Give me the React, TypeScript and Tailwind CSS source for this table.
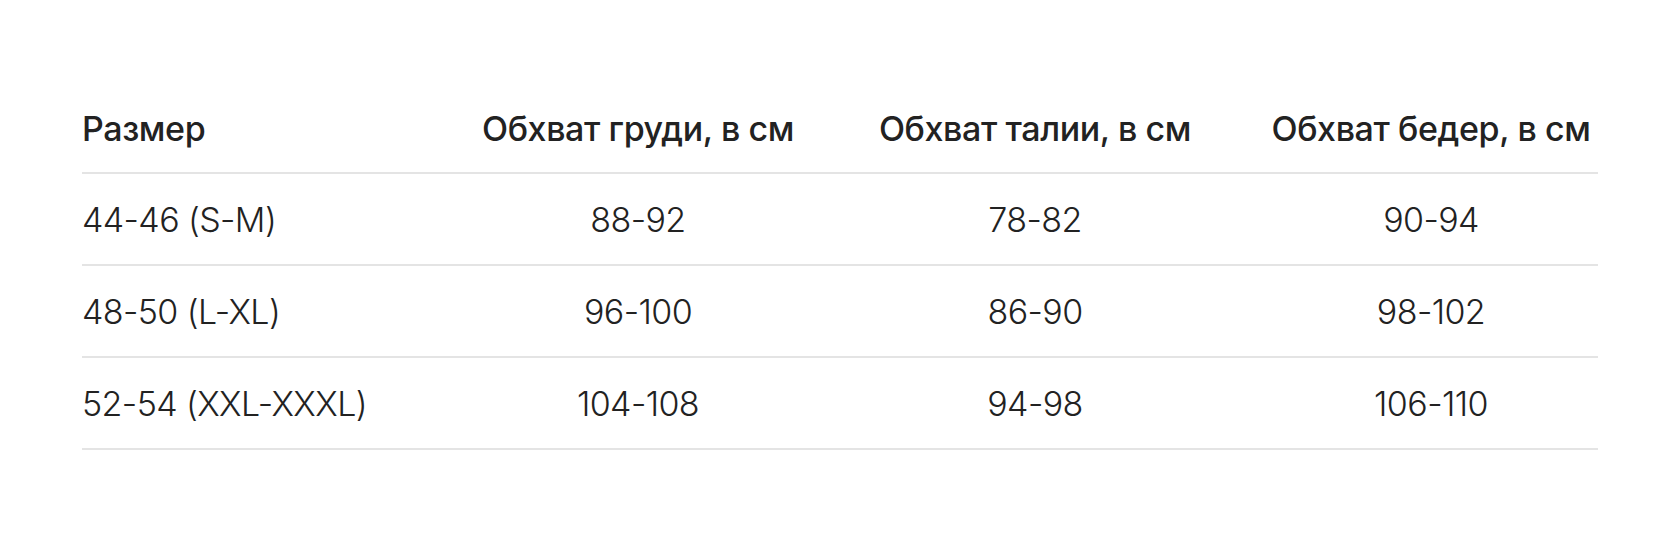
const headers = ['Размер', 'Обхват груди, в см', 'Обхват талии, в см', 'Обхват бедер, в см'];

const rows = [
  ['44-46 (S-M)', '88-92', '78-82', '90-94'],
  ['48-50 (L-XL)', '96-100', '86-90', '98-102'],
  ['52-54 (XXL-XXXL)', '104-108', '94-98', '106-110'],
];

const cols = 'grid grid-cols-[388px_336px_458px_334px]';

export default function App() {
  return (
    <div className="min-h-[534px] bg-white font-['Inter',sans-serif] text-[#222222]">
      <div className="pl-[82px] pt-[88px]">
        <div className="w-[1516px]">
          <div className={`${cols} h-[86px] items-center pb-[3px] border-b-2 border-[#e4e4e4] text-[34px] font-medium tracking-[-0.4px]`}>
            {headers.map((h, i) => (
              <div key={h} className={i === 0 ? 'text-left' : 'text-center'}>
                {h}
              </div>
            ))}
          </div>
          {rows.map((r) => (
            <div key={r[0]} className={`${cols} h-[92px] items-center border-b-2 border-[#e4e4e4] text-[34px] font-light tracking-[-0.6px]`}>
              {r.map((c, i) => (
                <div key={i} className={i === 0 ? 'text-left' : 'text-center'}>
                  {c}
                </div>
              ))}
            </div>
          ))}
        </div>
      </div>
    </div>
  );
}
